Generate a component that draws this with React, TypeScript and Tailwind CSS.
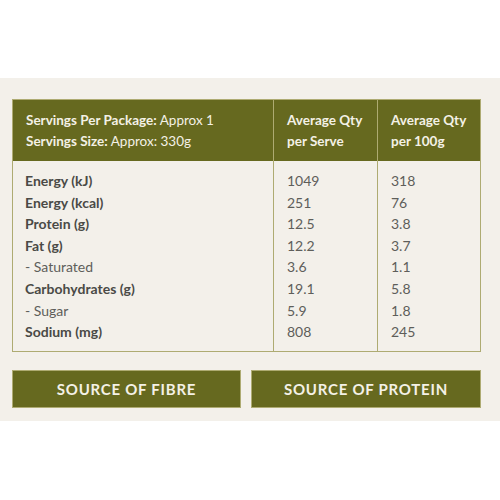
import React from 'react';

const rows = [
  { name: 'Energy (kJ)', serve: '1049', per100: '318', bold: true },
  { name: 'Energy (kcal)', serve: '251', per100: '76', bold: true },
  { name: 'Protein (g)', serve: '12.5', per100: '3.8', bold: true },
  { name: 'Fat (g)', serve: '12.2', per100: '3.7', bold: true },
  { name: '- Saturated', serve: '3.6', per100: '1.1', bold: false },
  { name: 'Carbohydrates (g)', serve: '19.1', per100: '5.8', bold: true },
  { name: '- Sugar', serve: '5.9', per100: '1.8', bold: false },
  { name: 'Sodium (mg)', serve: '808', per100: '245', bold: true },
];

export default function App() {
  return (
    <div className="h-[500px] w-[500px] bg-white pt-[78px] font-['Lato',sans-serif]">
      <div className="bg-[#f3f0ea] px-3 pt-[21px] pb-[13px]">
        <div className="grid w-[469px] grid-cols-[260px_104px_103px] border border-[#aeab72]">
          <div className="bg-[#66691f] px-[13px] pt-[10px] pb-[9px] text-[13.5px] leading-[21px] text-[#f4f1e6]">
            <div>
              <span className="font-bold">Servings Per Package:</span> Approx 1
            </div>
            <div>
              <span className="font-bold">Servings Size:</span> Approx: 330g
            </div>
          </div>
          <div className="border-l border-[#aeab72] bg-[#66691f] px-[13px] pt-[10px] pb-[9px] text-[13.5px] font-bold leading-[21px] text-[#f4f1e6]">
            <div>Average Qty</div>
            <div>per Serve</div>
          </div>
          <div className="border-l border-[#aeab72] bg-[#66691f] px-[13px] pt-[10px] pb-[9px] text-[13.5px] font-bold leading-[21px] text-[#f4f1e6]">
            <div>Average Qty</div>
            <div>per 100g</div>
          </div>

          <div className="px-[12px] pt-[9px] pb-[8px] text-[14px] leading-[21.6px] text-[#4a4a46]">
            {rows.map((r) => (
              <div key={r.name} className={r.bold ? 'font-bold' : 'font-normal text-[#5e5e5a]'}>
                {r.name}
              </div>
            ))}
          </div>
          <div className="border-l border-[#aeab72] px-[13px] pt-[9px] pb-[8px] text-[14px] leading-[21.6px] text-[#5e5e5a]">
            {rows.map((r) => (
              <div key={r.name}>{r.serve}</div>
            ))}
          </div>
          <div className="border-l border-[#aeab72] px-[13px] pt-[9px] pb-[8px] text-[14px] leading-[21.6px] text-[#5e5e5a]">
            {rows.map((r) => (
              <div key={r.name}>{r.per100}</div>
            ))}
          </div>
        </div>

        <div className="mt-[18px] flex w-[469px] gap-[10px]">
          <div className="flex h-[38px] w-[229px] items-center justify-center border border-[#aeab72] bg-[#66691f] text-[15px] font-bold tracking-[0.05em] text-[#f4f1e6]">
            SOURCE OF FIBRE
          </div>
          <div className="flex h-[38px] w-[230px] items-center justify-center border border-[#aeab72] bg-[#66691f] text-[15px] font-bold tracking-[0.05em] text-[#f4f1e6]">
            SOURCE OF PROTEIN
          </div>
        </div>
      </div>
    </div>
  );
}
